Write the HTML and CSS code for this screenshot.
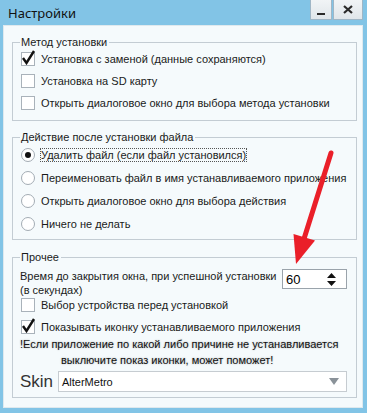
FILE: index.html
```html
<!DOCTYPE html>
<html lang="ru">
<head>
    <meta charset="UTF-8">
    <meta name="viewport" content="width=device-width, initial-scale=1.0">
    <title>Настройки</title>
    <link rel="stylesheet" href="styles.css">
</head>
<body>
    <div class="window">
        <div class="titlebar">
            <span class="title">Настройки</span>
            <div class="buttons">
                <div class="tbtn min"><span class="minbar"></span></div>
                <div class="tbtn close">
                    <svg width="10" height="9" viewBox="0 0 10 9"><path d="M1 1 L9 8 M9 1 L1 8" stroke="#2a2a2a" stroke-width="2.2"/></svg>
                </div>
            </div>
        </div>
        <div class="client">
            <!-- Метод установки -->
            <fieldset class="group g1">
                <legend>Метод установки</legend>
                <div class="row"><span class="cb checked"><svg width="15" height="15" viewBox="0 0 15 15"><path d="M2 8 L5.5 13 L13 1" fill="none" stroke="#111" stroke-width="2.4"/></svg></span>Установка с заменой (данные сохраняются)</div>
                <div class="row"><span class="cb"></span>Установка на SD карту</div>
                <div class="row"><span class="cb"></span>Открыть диалоговое окно для выбора метода установки</div>
            </fieldset>

            <!-- Действие после установки -->
            <fieldset class="group g2">
                <legend>Действие после установки файла</legend>
                <div class="row"><span class="rb on"></span><span class="focus">Удалить файл (если файл установился)</span></div>
                <div class="row"><span class="rb"></span>Переименовать файл в имя устанавливаемого приложения</div>
                <div class="row"><span class="rb"></span>Открыть диалоговое окно для выбора действия</div>
                <div class="row"><span class="rb"></span>Ничего не делать</div>
            </fieldset>

            <!-- Прочее -->
            <fieldset class="group g3">
                <legend>Прочее</legend>
                <div class="timeout">
                    <div class="tlabel">Время до закрытия окна, при успешной установки<br>(в секундах)</div>
                    <div class="spin">
                        <span>60</span>
                        <svg width="9" height="13" viewBox="0 0 9 13"><path d="M4.5 0 L9 5 L0 5 Z M0 8 L9 8 L4.5 13 Z" fill="#111"/></svg>
                    </div>
                </div>
                <div class="row"><span class="cb"></span>Выбор устройства перед установкой</div>
                <div class="row"><span class="cb checked"><svg width="15" height="15" viewBox="0 0 15 15"><path d="M2 8 L5.5 13 L13 1" fill="none" stroke="#111" stroke-width="2.4"/></svg></span>Показывать иконку устанавливаемого приложения</div>
                <div class="warn">
                    <div>!Если приложение по какой либо причине не устанавливается</div>
                    <div class="w2">выключите показ иконки, может поможет!</div>
                </div>
                <div class="skin">
                    <span class="skinlabel">Skin</span>
                    <div class="select">
                        <span>AlterMetro</span>
                        <svg width="10" height="7" viewBox="0 0 10 7"><path d="M0 0 L10 0 L5 7 Z" fill="#8a9299"/></svg>
                    </div>
                </div>
            </fieldset>
        </div>

        <!-- стрелка поверх окна -->
        <svg class="arrow" width="367" height="413" viewBox="0 0 367 413">
            <line x1="331" y1="153" x2="303" y2="242" stroke="#ea1f29" stroke-width="5" stroke-linecap="round"/>
            <polygon points="296,264 293.5,234 315,240.5" fill="#ea1f29"/>
        </svg>
    </div>
</body>
</html>
```

FILE: styles.css
```css
*{
    box-sizing: border-box;
}
body{
    margin: 0;
    font-family: "Liberation Sans", Arial, sans-serif;
    font-size: 11px;
    color: #1a1a1a;
}
.window{
    position: relative;
    width: 367px;
    height: 413px;
    background-color: #82c4e6;
    padding: 0 4px 5px 3px;
    display: flex;
    flex-direction: column;
}
.titlebar{
    height: 25px;
    flex: none;
    display: flex;
    justify-content: space-between;
    align-items: flex-start;
}
.title{
    font-family: "Noto Sans", sans-serif;
    font-size: 13px;
    color: #111;
    margin: 4px 0 0 5px;
}
.buttons{
    display: flex;
    gap: 1px;
}
.tbtn{
    height: 20px;
    background: linear-gradient(#f1f4f6, #e0e6ea);
    border: 1px solid #9fb6c6;
    border-top: 0;
    display: flex;
    align-items: center;
    justify-content: center;
}
.min{
    width: 22px;
    align-items: flex-end;
    padding-bottom: 4px;
}
.minbar{
    width: 8px;
    height: 2px;
    background-color: #2a2a2a;
}
.close{
    width: 30px;
}
.client{
    flex: 1;
    background-color: #f5fafc;
    border: 1px solid #dfe9ee;
    padding: 10px 5px 0 8px;
}
.group{
    margin: 0;
    border: 1px solid #c3ccd3;
    padding: 0 6px 6px 7px;
}
.group legend{
    padding: 0 2px 0 1px;
    line-height: 12px;
    color: #1a1a1a;
}
.g2{
    margin-top: 10px;
    padding-bottom: 4px;
}
.g3{
    margin-top: 11px;
    padding-bottom: 5px;
}
.row{
    height: 22px;
    display: flex;
    align-items: center;
    white-space: nowrap;
}
.g2 .row{
    height: 23px;
}
.cb{
    position: relative;
    width: 14px;
    height: 14px;
    margin: 0 6px 0 1px;
    background-color: #fff;
    border: 1px solid #a9b2ba;
    flex: none;
}
.cb svg{
    position: absolute;
    left: -1px;
    top: -3px;
}
.rb{
    width: 14px;
    height: 14px;
    margin: 0 6px 0 1px;
    border-radius: 50%;
    background-color: #fff;
    border: 1px solid #a3acb4;
    flex: none;
    display: flex;
    align-items: center;
    justify-content: center;
}
.rb.on::after{
    content: "";
    width: 6px;
    height: 6px;
    border-radius: 50%;
    background-color: #111;
}
.focus{
    outline: 1px dotted #555;
}
.timeout{
    display: flex;
    justify-content: space-between;
    align-items: flex-start;
    padding-top: 6px;
    margin-bottom: -3px;
}
.tlabel{
    line-height: 14px;
    white-space: nowrap;
}
.spin{
    width: 65px;
    height: 20px;
    margin-right: 3px;
    background-color: #fff;
    border: 1px solid #9aa3ab;
    display: flex;
    align-items: center;
    justify-content: space-between;
    padding: 0 10px 0 3px;
    font-size: 13px;
    color: #000;
}
.warn{
    line-height: 16px;
    margin-top: -2px;
    color: #111;
    white-space: nowrap;
    text-shadow: 0 0 2px rgba(0, 0, 0, 0.3);
}
.w2{
    padding-left: 41px;
}
.skin{
    display: flex;
    align-items: center;
    margin-top: 3px;
}
.skinlabel{
    font-size: 17px;
    color: #333;
    width: 38px;
}
.select{
    flex: 1;
    height: 21px;
    margin-right: 3px;
    background-color: #fff;
    border: 1px solid #c6ccd1;
    display: flex;
    align-items: center;
    justify-content: space-between;
    padding: 0 7px 0 3px;
    font-size: 11px;
    color: #111;
}
.arrow{
    position: absolute;
    left: 0;
    top: 0;
    pointer-events: none;
}
```
